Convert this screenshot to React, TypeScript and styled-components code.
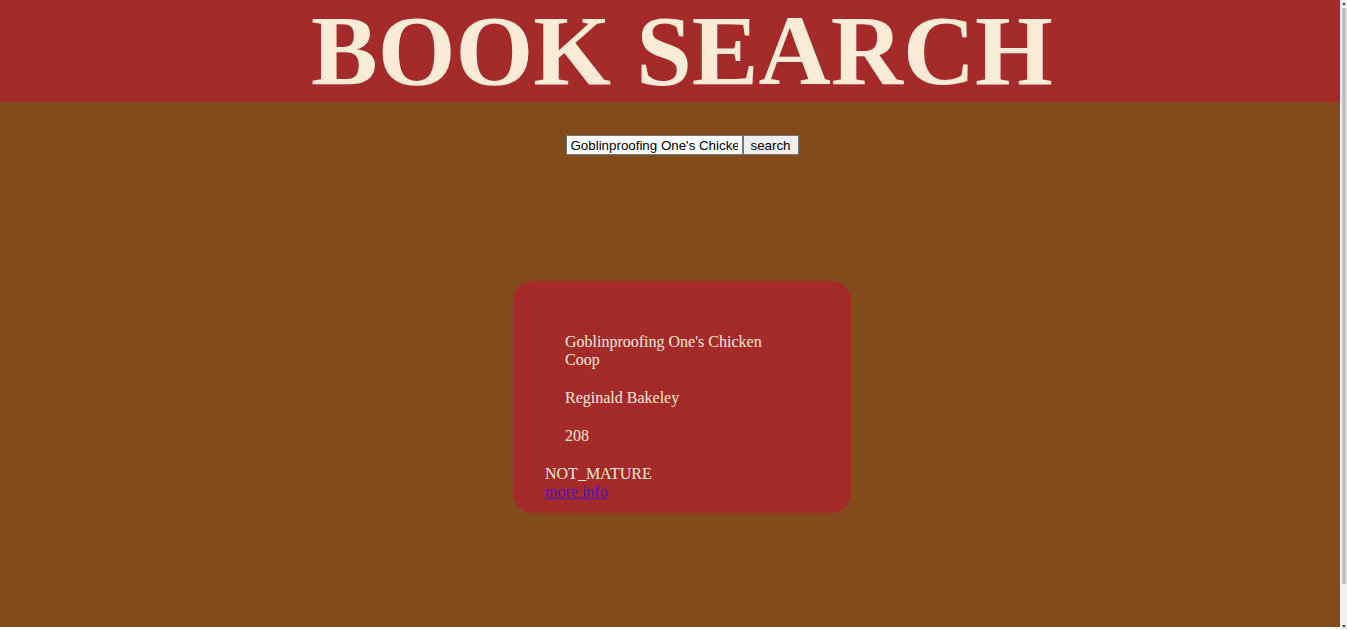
import React from "react";
import styled, { createGlobalStyle } from "styled-components";

const GlobalStyle = createGlobalStyle`
  html, body {
    margin: 0;
    overflow: hidden;
  }
  body {
    background: #ffffff;
    font-family: "Liberation Serif", "Times New Roman", serif;
  }
`;

const Shell = styled.div`
  display: flex;
  height: 630px;
`;

const Page = styled.div`
  flex: 1;
  height: 627px;
  background: #834a1c;
  display: flex;
  flex-direction: column;
`;

const ScrollTrack = styled.div`
  width: 7px;
  height: 630px;
  background: #f1f1f1;
  display: flex;
  flex-direction: column;
  align-items: center;
  padding: 2px 0;
  box-sizing: border-box;
`;

const ScrollArrow = styled.div<{ $down?: boolean }>`
  width: 0;
  height: 0;
  border-left: 2px solid transparent;
  border-right: 2px solid transparent;
  ${(p) =>
    p.$down
      ? "border-top: 3px solid #505050;"
      : "border-bottom: 3px solid #505050;"}
`;

const ScrollThumb = styled.div`
  width: 4px;
  margin: 3px 0 0 1px;
  height: 576px;
  background: #c1c1c1;
  margin-bottom: auto;
`;

const Header = styled.header`
  height: 102px;
  background: #a52a2a;
  display: flex;
  justify-content: center;
  align-items: center;
  padding-left: 24px;
`;

const Title = styled.h1`
  margin: 0;
  font-family: "Liberation Serif", "Times New Roman", serif;
  font-weight: bold;
  font-size: 100px;
  line-height: 100px;
  color: #faebd7;
  white-space: nowrap;
`;

const Main = styled.main`
  display: flex;
  flex-direction: column;
  align-items: center;
  padding-left: 24px;
`;

const SearchForm = styled.form`
  display: flex;
  margin-top: 33px;
  height: 20px;
`;

const SearchInput = styled.input`
  box-sizing: border-box;
  width: 177px;
  height: 20px;
  padding: 1px 4px;
  border: 1px solid #767676;
  background: #ffffff;
  font-family: Arial, "Liberation Sans", sans-serif;
  font-size: 13.33px;
  color: #000;
  outline: none;
`;

const SearchButton = styled.button`
  box-sizing: border-box;
  width: 56px;
  height: 20px;
  padding: 0 6px;
  border: 1px solid #767676;
  background: #efefef;
  font-family: Arial, "Liberation Sans", sans-serif;
  font-size: 13.33px;
  color: #000;
`;

const Card = styled.section`
  box-sizing: border-box;
  width: 338px;
  margin-top: 126px;
  padding: 52px 32px 12px 32px;
  background: #a52a2a;
  border-radius: 20px;
  color: #faebd7;
  font-size: 16px;
  line-height: 18px;
  display: flex;
  flex-direction: column;
`;

const Details = styled.div`
  display: flex;
  flex-direction: column;
  gap: 20px;
  padding-left: 20px;
  margin-bottom: 20px;
`;

const Field = styled.div<{ $width?: number }>`
  width: ${(p) => (p.$width ? `${p.$width}px` : "auto")};
`;

const Rating = styled.div``;

const MoreLink = styled.a`
  color: #5312c8;
  text-decoration: underline;
  width: fit-content;
`;

export default function App() {
  return (
    <>
      <GlobalStyle />
      <Shell>
        <Page>
          <Header>
            <Title>BOOK SEARCH</Title>
          </Header>
          <Main>
            <SearchForm onSubmit={(e) => e.preventDefault()}>
              <SearchInput defaultValue="Goblinproofing One's Chicken Coop" />
              <SearchButton type="submit">search</SearchButton>
            </SearchForm>
            <Card>
              <Details>
                <Field $width={210}>Goblinproofing One's Chicken Coop</Field>
                <Field>Reginald Bakeley</Field>
                <Field>208</Field>
              </Details>
              <Rating>NOT_MATURE</Rating>
              <MoreLink href="#">more info</MoreLink>
            </Card>
          </Main>
        </Page>
        <ScrollTrack>
          <ScrollArrow />
          <ScrollThumb />
          <ScrollArrow $down />
        </ScrollTrack>
      </Shell>
    </>
  );
}
